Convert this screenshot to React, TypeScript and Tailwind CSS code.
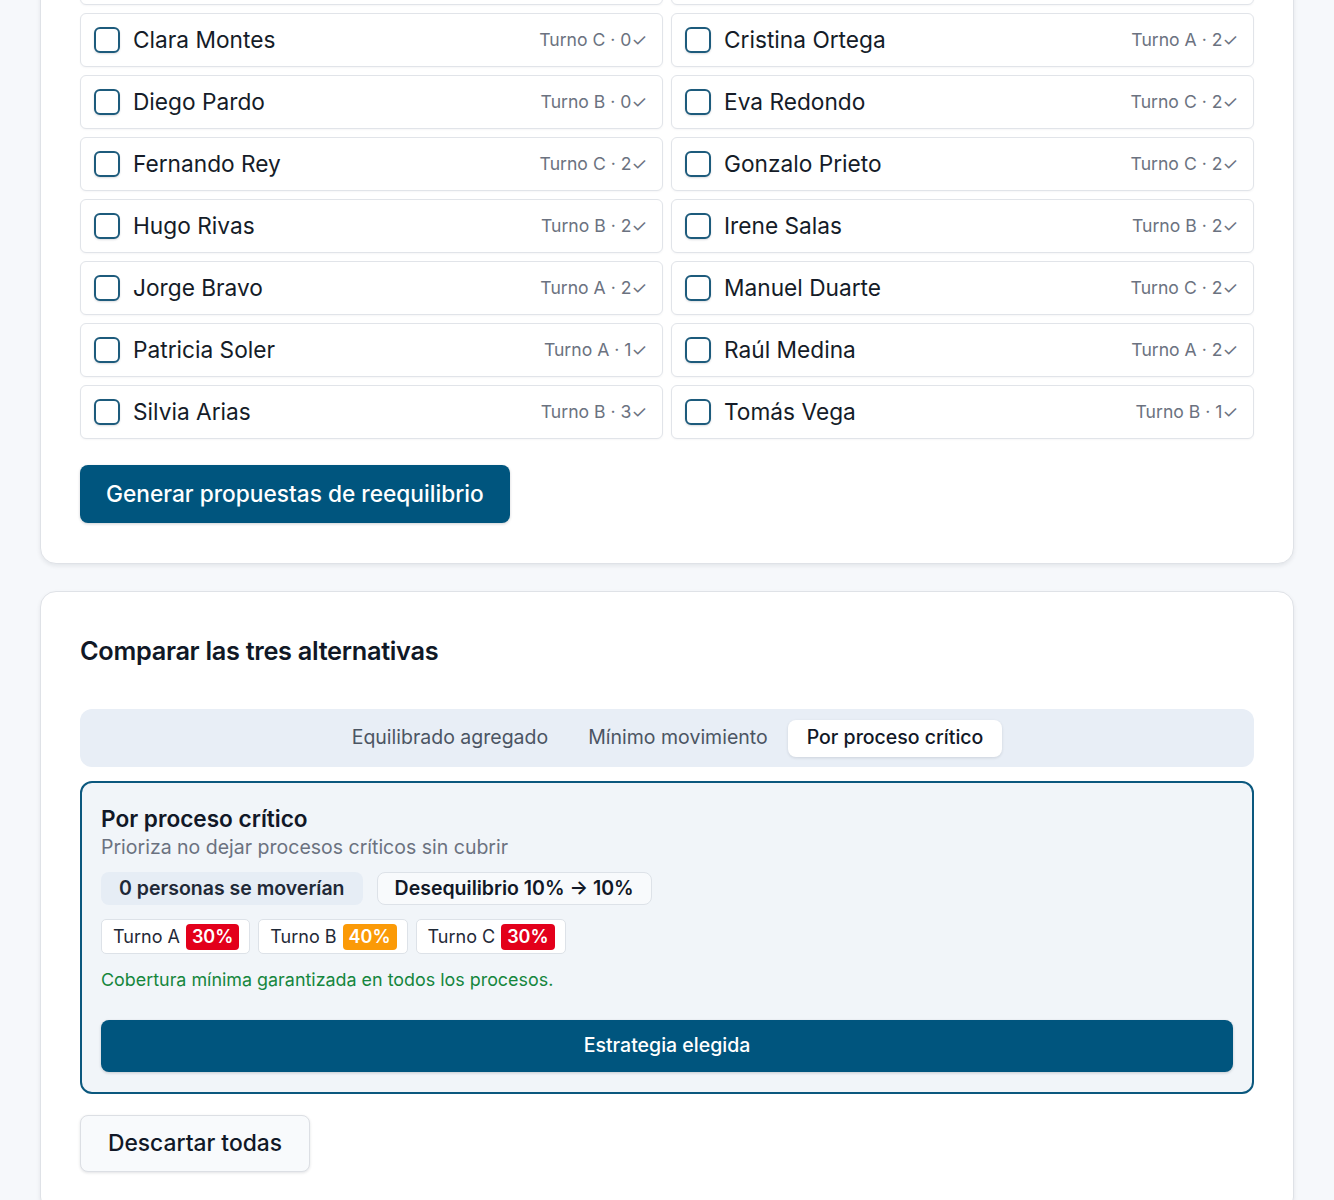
type Person = { name: string; turno: string; done: number };

const PEOPLE: Person[] = [
  { name: 'Ana Beltrán', turno: 'A', done: 1 },
  { name: 'Bruno Castaño', turno: 'B', done: 2 },
  { name: 'Clara Montes', turno: 'C', done: 0 },
  { name: 'Cristina Ortega', turno: 'A', done: 2 },
  { name: 'Diego Pardo', turno: 'B', done: 0 },
  { name: 'Eva Redondo', turno: 'C', done: 2 },
  { name: 'Fernando Rey', turno: 'C', done: 2 },
  { name: 'Gonzalo Prieto', turno: 'C', done: 2 },
  { name: 'Hugo Rivas', turno: 'B', done: 2 },
  { name: 'Irene Salas', turno: 'B', done: 2 },
  { name: 'Jorge Bravo', turno: 'A', done: 2 },
  { name: 'Manuel Duarte', turno: 'C', done: 2 },
  { name: 'Patricia Soler', turno: 'A', done: 1 },
  { name: 'Raúl Medina', turno: 'A', done: 2 },
  { name: 'Silvia Arias', turno: 'B', done: 3 },
  { name: 'Tomás Vega', turno: 'B', done: 1 },
];

const TABS = ['Equilibrado agregado', 'Mínimo movimiento', 'Por proceso crítico'];

const SHIFTS = [
  { label: 'Turno A', pct: '30%', tone: 'bg-[#e3001b]' },
  { label: 'Turno B', pct: '40%', tone: 'bg-[#fb9a07]' },
  { label: 'Turno C', pct: '30%', tone: 'bg-[#e3001b]' },
];

const PersonRow = ({ p }: { p: Person }) => (
  <label className="flex h-[54px] items-center rounded-[6px] border border-[#e1e4e9] bg-white pl-[13px] pr-[15px] shadow-[0_1px_2px_rgba(15,23,42,0.04)]">
    <span className="h-[26px] w-[26px] shrink-0 rounded-[6px] border-2 border-[#1d5b7c] bg-white shadow-[0_1px_2px_rgba(15,23,42,0.15)]" />
    <span className="ml-[13px] flex-1 text-[22.7px] text-[#151c28]">{p.name}</span>
    <span className="text-[17.6px] text-[#6b7280]">
      Turno {p.turno} · {p.done}✓
    </span>
  </label>
);

export default function App() {
  return (
    <div
      className="min-h-[1200px] overflow-hidden bg-[#f6f8fb] px-[40px] pb-10"
      style={{ fontFamily: 'Inter, "Noto Sans", sans-serif' }}
    >
      {/* employee picker */}
      <section className="-mt-[90px] rounded-[16px] border border-[#dfe2e7] bg-white px-[39px] pb-[40px] pt-[40px] shadow-[0_2px_4px_rgba(15,23,42,0.08)]">
        <div className="grid grid-cols-2 gap-[8px]">
          {PEOPLE.map((p) => (
            <PersonRow key={p.name} p={p} />
          ))}
        </div>
        <button className="mt-[26px] h-[58px] rounded-[8px] bg-[#00557e] px-[26px] text-[22.7px] font-medium text-white shadow-[0_1px_3px_rgba(15,23,42,0.2)]">
          Generar propuestas de reequilibrio
        </button>
      </section>

      {/* strategy comparison */}
      <section className="mt-[27px] rounded-[16px] border border-[#dfe2e7] bg-white px-[39px] pb-[40px] pt-[43px] shadow-[0_2px_4px_rgba(15,23,42,0.08)]">
        <h2 className="text-[25.3px] font-semibold leading-[32px] tracking-[-0.3px] text-[#101826]">
          Comparar las tres alternativas
        </h2>

        <div className="mt-[42px] flex h-[58px] items-center justify-center rounded-[12px] bg-[#e8eef6]">
          {TABS.map((t, i) =>
            i === TABS.length - 1 ? (
              <span
                key={t}
                className="flex h-[37px] items-center rounded-[8px] bg-white px-[19px] text-[19.5px] font-medium text-[#111827] shadow-[0_1px_3px_rgba(15,23,42,0.12)]"
              >
                {t}
              </span>
            ) : (
              <span key={t} className="px-[20px] text-[19.5px] text-[#4b5563]">
                {t}
              </span>
            )
          )}
        </div>

        <div className="mt-[14px] rounded-[12px] border-2 border-[#0b587e] bg-[#f1f5f9] px-[19px] pb-[20px] pt-[22px]">
          <h3 className="text-[22.6px] font-semibold leading-[28px] text-[#111827]">Por proceso crítico</h3>
          <p className="mt-[1px] text-[19.5px] leading-[26px] text-[#6b7280]">
            Prioriza no dejar procesos críticos sin cubrir
          </p>

          <div className="mt-[12px] flex gap-[14px]">
            <span className="flex h-[33px] items-center rounded-[8px] bg-[#e6edf5] px-[18px] text-[19.5px] font-semibold text-[#1f2937]">
              0 personas se moverían
            </span>
            <span className="flex h-[33px] items-center rounded-[8px] border border-[#dde2e8] bg-[#f8fafc] px-[17px] text-[19.5px] font-semibold text-[#111827]">
              Desequilibrio 10% → 10%
            </span>
          </div>

          <div className="mt-[14px] flex gap-[8px]">
            {SHIFTS.map((s) => (
              <span
                key={s.label}
                className="flex h-[35px] items-center gap-[6px] rounded-[5px] border border-[#dde2e8] bg-white pl-[11px] pr-[10px] text-[18px] text-[#1f2937]"
              >
                {s.label}
                <span className={`rounded-[4px] px-[6px] text-[18px] font-semibold leading-[26px] text-white ${s.tone}`}>
                  {s.pct}
                </span>
              </span>
            ))}
          </div>

          <p className="mt-[14px] text-[17.9px] leading-[24px] text-[#15863d]">
            Cobertura mínima garantizada en todos los procesos.
          </p>

          <button className="mt-[28px] flex h-[52px] w-full items-center justify-center rounded-[8px] bg-[#00557e] text-[19.5px] font-medium text-white shadow-[0_1px_3px_rgba(15,23,42,0.2)]">
            Estrategia elegida
          </button>
        </div>

        <button className="mt-[21px] flex h-[57px] items-center rounded-[8px] border border-[#dcdfe4] bg-[#f8fafc] px-[27px] text-[22.8px] font-medium text-[#111827] shadow-[0_1px_3px_rgba(15,23,42,0.12)]">
          Descartar todas
        </button>
      </section>
    </div>
  );
}
